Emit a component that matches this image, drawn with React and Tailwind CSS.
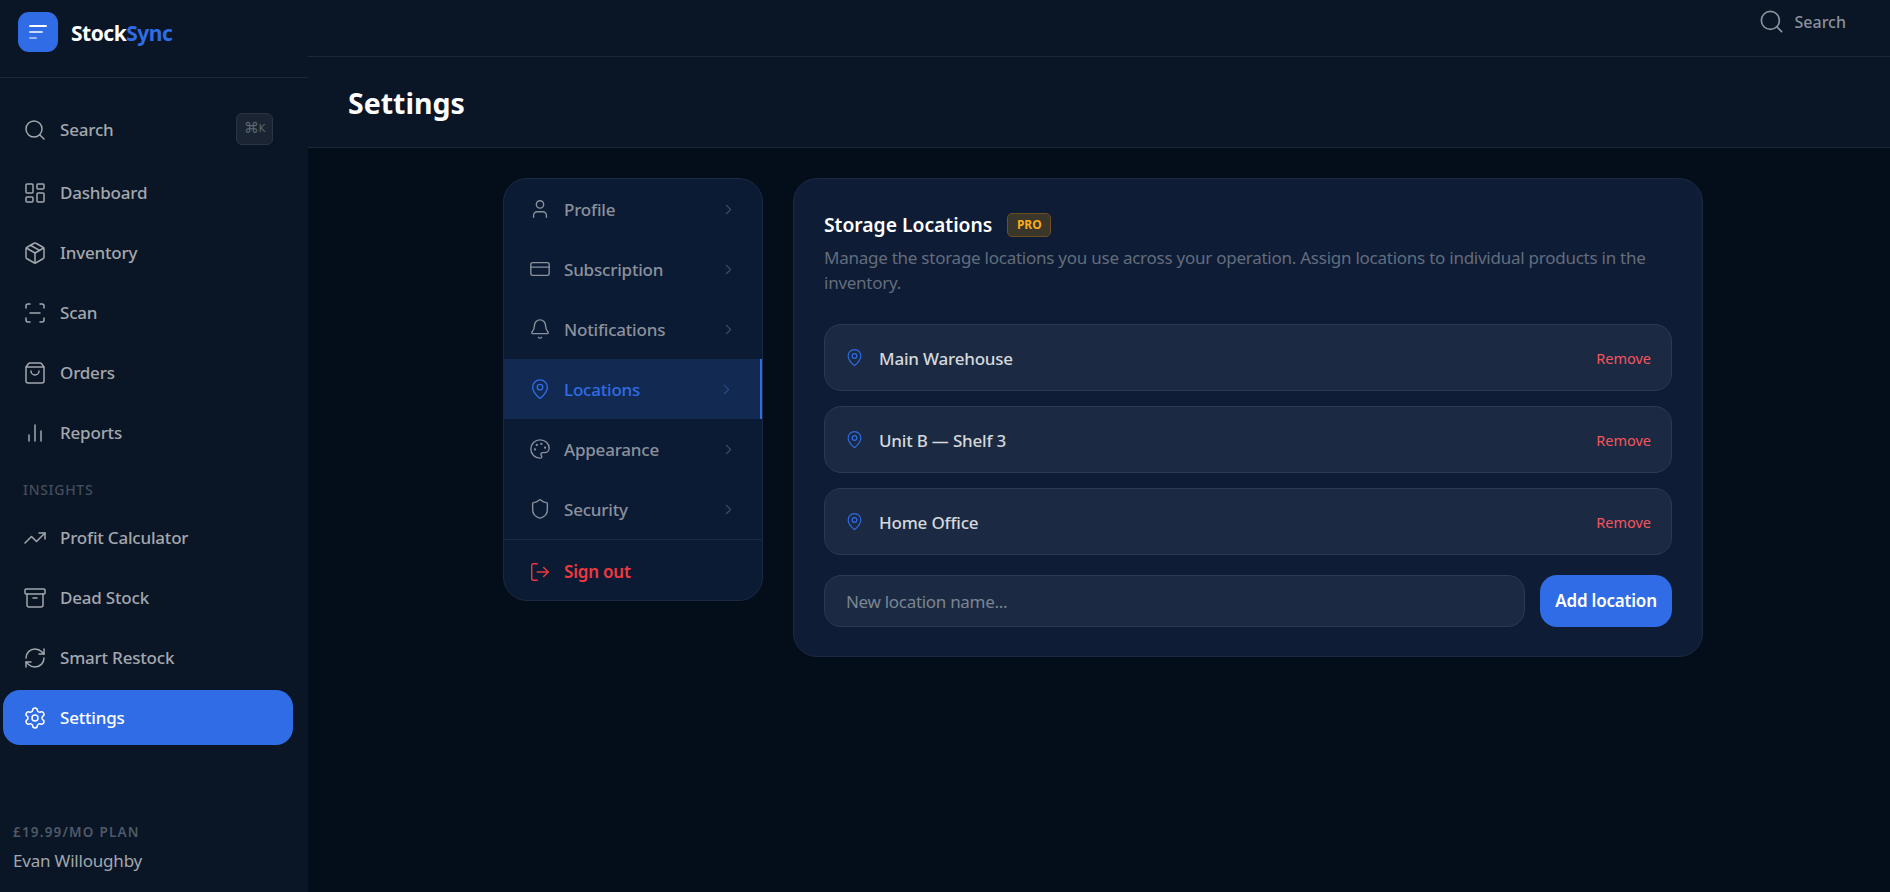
import {
  Archive,
  Bell,
  ChevronRight,
  CreditCard,
  LayoutDashboard,
  LogOut,
  MapPin,
  Package,
  Palette,
  RefreshCw,
  ScanLine,
  Search,
  Settings,
  Shield,
  ShoppingBag,
  TrendingUp,
  User,
} from 'lucide-react';

function BarsIcon({ size, strokeWidth }) {
  return (
    <svg
      width={size}
      height={size}
      viewBox="0 0 24 24"
      fill="none"
      stroke="currentColor"
      strokeWidth={strokeWidth}
      strokeLinecap="round"
      strokeLinejoin="round"
    >
      <path d="M18 20V10" />
      <path d="M12 20V4" />
      <path d="M6 20v-6" />
    </svg>
  );
}

const mainNav = [
  { label: 'Dashboard', icon: LayoutDashboard },
  { label: 'Inventory', icon: Package },
  { label: 'Scan', icon: ScanLine },
  { label: 'Orders', icon: ShoppingBag },
  { label: 'Reports', icon: BarsIcon },
];

const insightsNav = [
  { label: 'Profit Calculator', icon: TrendingUp },
  { label: 'Dead Stock', icon: Archive },
  { label: 'Smart Restock', icon: RefreshCw },
  { label: 'Settings', icon: Settings, active: true },
];

const settingsNav = [
  { label: 'Profile', icon: User },
  { label: 'Subscription', icon: CreditCard },
  { label: 'Notifications', icon: Bell },
  { label: 'Locations', icon: MapPin, active: true },
  { label: 'Appearance', icon: Palette },
  { label: 'Security', icon: Shield },
];

const locations = ['Main Warehouse', 'Unit B — Shelf 3', 'Home Office'];

function NavItem({ label, icon: Icon, active }) {
  return (
    <a
      className={`flex h-[55px] items-center gap-[13px] rounded-[17px] pl-[20px] text-[17px] font-medium tracking-[-0.2px] ${
        active ? 'bg-[#2f6ce5] text-white' : 'text-[#a3a7ae]'
      }`}
    >
      <Icon size={24} strokeWidth={1.5} />
      {label}
    </a>
  );
}

function SettingsItem({ label, icon: Icon, active }) {
  return (
    <a
      className={`flex h-[60px] items-center pl-[25px] pr-[25px] text-[17px] font-medium tracking-[-0.2px] ${
        active
          ? 'border-r-2 border-[#2f6ce5] bg-[#122a52] text-[#2f6ce5]'
          : 'text-[#8b919c]'
      }`}
    >
      <Icon size={22} strokeWidth={1.5} className="mr-[13px]" />
      <span className="flex-1 pt-[2px]">{label}</span>
      <ChevronRight size={17} strokeWidth={1.5} className={active ? 'text-[#2a4a80]' : 'text-[#3f4b60]'} />
    </a>
  );
}

export default function App() {
  return (
    <div className="flex h-[892px] overflow-hidden bg-[#040d1a] font-['Noto_Sans',sans-serif] text-white">
      <aside className="flex w-[308px] shrink-0 flex-col bg-[#0a1525]">
        <div className="flex h-[78px] items-start gap-[13px] border-b border-[#1c2737] px-[18px] pt-[12px]">
          <div className="flex h-10 w-10 items-center justify-center rounded-[11px] bg-[#2f6ce5]">
            <svg width="18" height="14" viewBox="0 0 18 14" fill="none" strokeWidth="2" strokeLinecap="round">
              <path d="M1 1h16" stroke="#ffffff" />
              <path d="M1 7h12" stroke="#ffffff" strokeOpacity="0.75" />
              <path d="M1 13h6" stroke="#ffffff" strokeOpacity="0.5" />
            </svg>
          </div>
          <div className="text-[21px] font-bold leading-[42px] tracking-[-0.5px]">
            Stock<span className="text-[#2f6ce5]">Sync</span>
          </div>
        </div>

        <nav className="mt-[24px] flex flex-col pl-[3px] pr-[15px]">
          <a className="mb-[8px] flex h-[55px] items-center gap-[13px] pl-[20px] pr-[20px] text-[17px] font-medium tracking-[-0.2px] text-[#a3a7ae]">
            <Search size={24} strokeWidth={1.5} />
            <span className="flex-1">Search</span>
            <span className="mb-[2px] flex h-8 w-[37px] items-center justify-center rounded-md border border-[#2a3442] bg-[#1a2432] font-['DejaVu_Sans',sans-serif] text-[#5d6775]">
              <span className="text-[15px]">⌘</span>
              <span className="text-[10px]">K</span>
            </span>
          </a>
          <div className="flex flex-col gap-[5px]">
            {mainNav.map((item) => (
              <NavItem key={item.label} {...item} />
            ))}
          </div>
          <div className="mb-[10px] ml-[20px] mt-[20px] text-[14px] font-medium leading-[20px] tracking-[0.7px] text-[#454e5c]">
            INSIGHTS
          </div>
          <div className="flex flex-col gap-[5px]">
            {insightsNav.map((item) => (
              <NavItem key={item.label} {...item} />
            ))}
          </div>
        </nav>

        <div className="mt-auto px-[13px] pb-[19px]">
          <div className="text-[13.5px] font-semibold leading-[18px] tracking-[1.2px] text-[#4f5967]">£19.99/MO PLAN</div>
          <div className="mt-[8px] text-[17px] leading-[24px] tracking-[-0.2px] text-[#a3a7ae]">Evan Willoughby</div>
        </div>
      </aside>

      <main className="flex min-w-0 flex-1 flex-col">
        <div className="flex h-[57px] shrink-0 items-center justify-end gap-[10px] border-b border-[#1c2737] bg-[#0a1525] pb-[13px] pr-[44px]">
          <Search size={27} strokeWidth={1.5} className="text-[#8b919c]" />
          <span className="text-[16px] font-medium text-[#8b919c]">Search</span>
        </div>
        <header className="flex h-[91px] shrink-0 items-center border-b border-[#1c2737] bg-[#0a1525] pl-[40px] pt-[2px]">
          <h1 className="text-[28.5px] font-bold">Settings</h1>
        </header>

        <div className="flex items-start gap-[30px] pl-[195px] pt-[30px]">
          <div className="w-[260px] shrink-0 overflow-hidden rounded-[24px] border border-[#1b2a42] bg-[#0b1b34]">
            {settingsNav.map((item) => (
              <SettingsItem key={item.label} {...item} />
            ))}
            <a className="flex h-[61px] items-center border-t border-[#1b2a42] pl-[25px] pt-[3px] text-[17px] font-semibold tracking-[-0.2px] text-[#f0383f]">
              <LogOut size={22} strokeWidth={1.5} className="mr-[13px]" />
              Sign out
            </a>
          </div>

          <section className="w-[910px] shrink-0 rounded-[24px] border border-[#1b2a42] bg-[#0e1c36] px-[30px] pb-[29px] pt-[34px]">
            <div className="flex items-center gap-[15px]">
              <h2 className="text-[19.3px] font-semibold leading-[24px]">Storage Locations</h2>
              <span className="flex h-[24px] w-[44px] items-center justify-center rounded-[5px] border border-[#6d4d22] bg-[#3a3629] text-[12px] font-bold text-[#fbab1c]">
                PRO
              </span>
            </div>
            <p className="mt-[8px] text-[17px] leading-[25px] tracking-[-0.25px] text-[#636d7c]">
              Manage the storage locations you use across your operation. Assign locations to individual products in the inventory.
            </p>

            <div className="mt-[29px] flex flex-col gap-[15px]">
              {locations.map((name) => (
                <div
                  key={name}
                  className="flex h-[67px] items-center rounded-[17px] border border-[#2a3a54] bg-[#1b2a42] pl-[20px] pr-[20px]"
                >
                  <MapPin size={19} strokeWidth={1.5} className="mr-[15px] text-[#2f6ce5]" />
                  <span className="flex-1 pt-[2px] text-[17px] font-medium tracking-[-0.2px] text-[#d5d8dc]">{name}</span>
                  <button className="pt-[2px] text-[14.5px] text-[#f5555d]">Remove</button>
                </div>
              ))}
            </div>

            <div className="mt-[20px] flex gap-[15px]">
              <input
                placeholder="New location name..."
                className="h-[52px] min-w-0 flex-1 rounded-[17px] border border-[#2a3a54] bg-[#1b2a42] px-[21px] text-[17px] tracking-[-0.3px] text-white outline-none placeholder:text-[#7b8592]"
              />
              <button className="h-[52px] w-[132px] rounded-[17px] bg-[#2f6ce5] text-[17px] font-semibold tracking-[-0.2px] text-white">
                Add location
              </button>
            </div>
          </section>
        </div>
      </main>
    </div>
  );
}
